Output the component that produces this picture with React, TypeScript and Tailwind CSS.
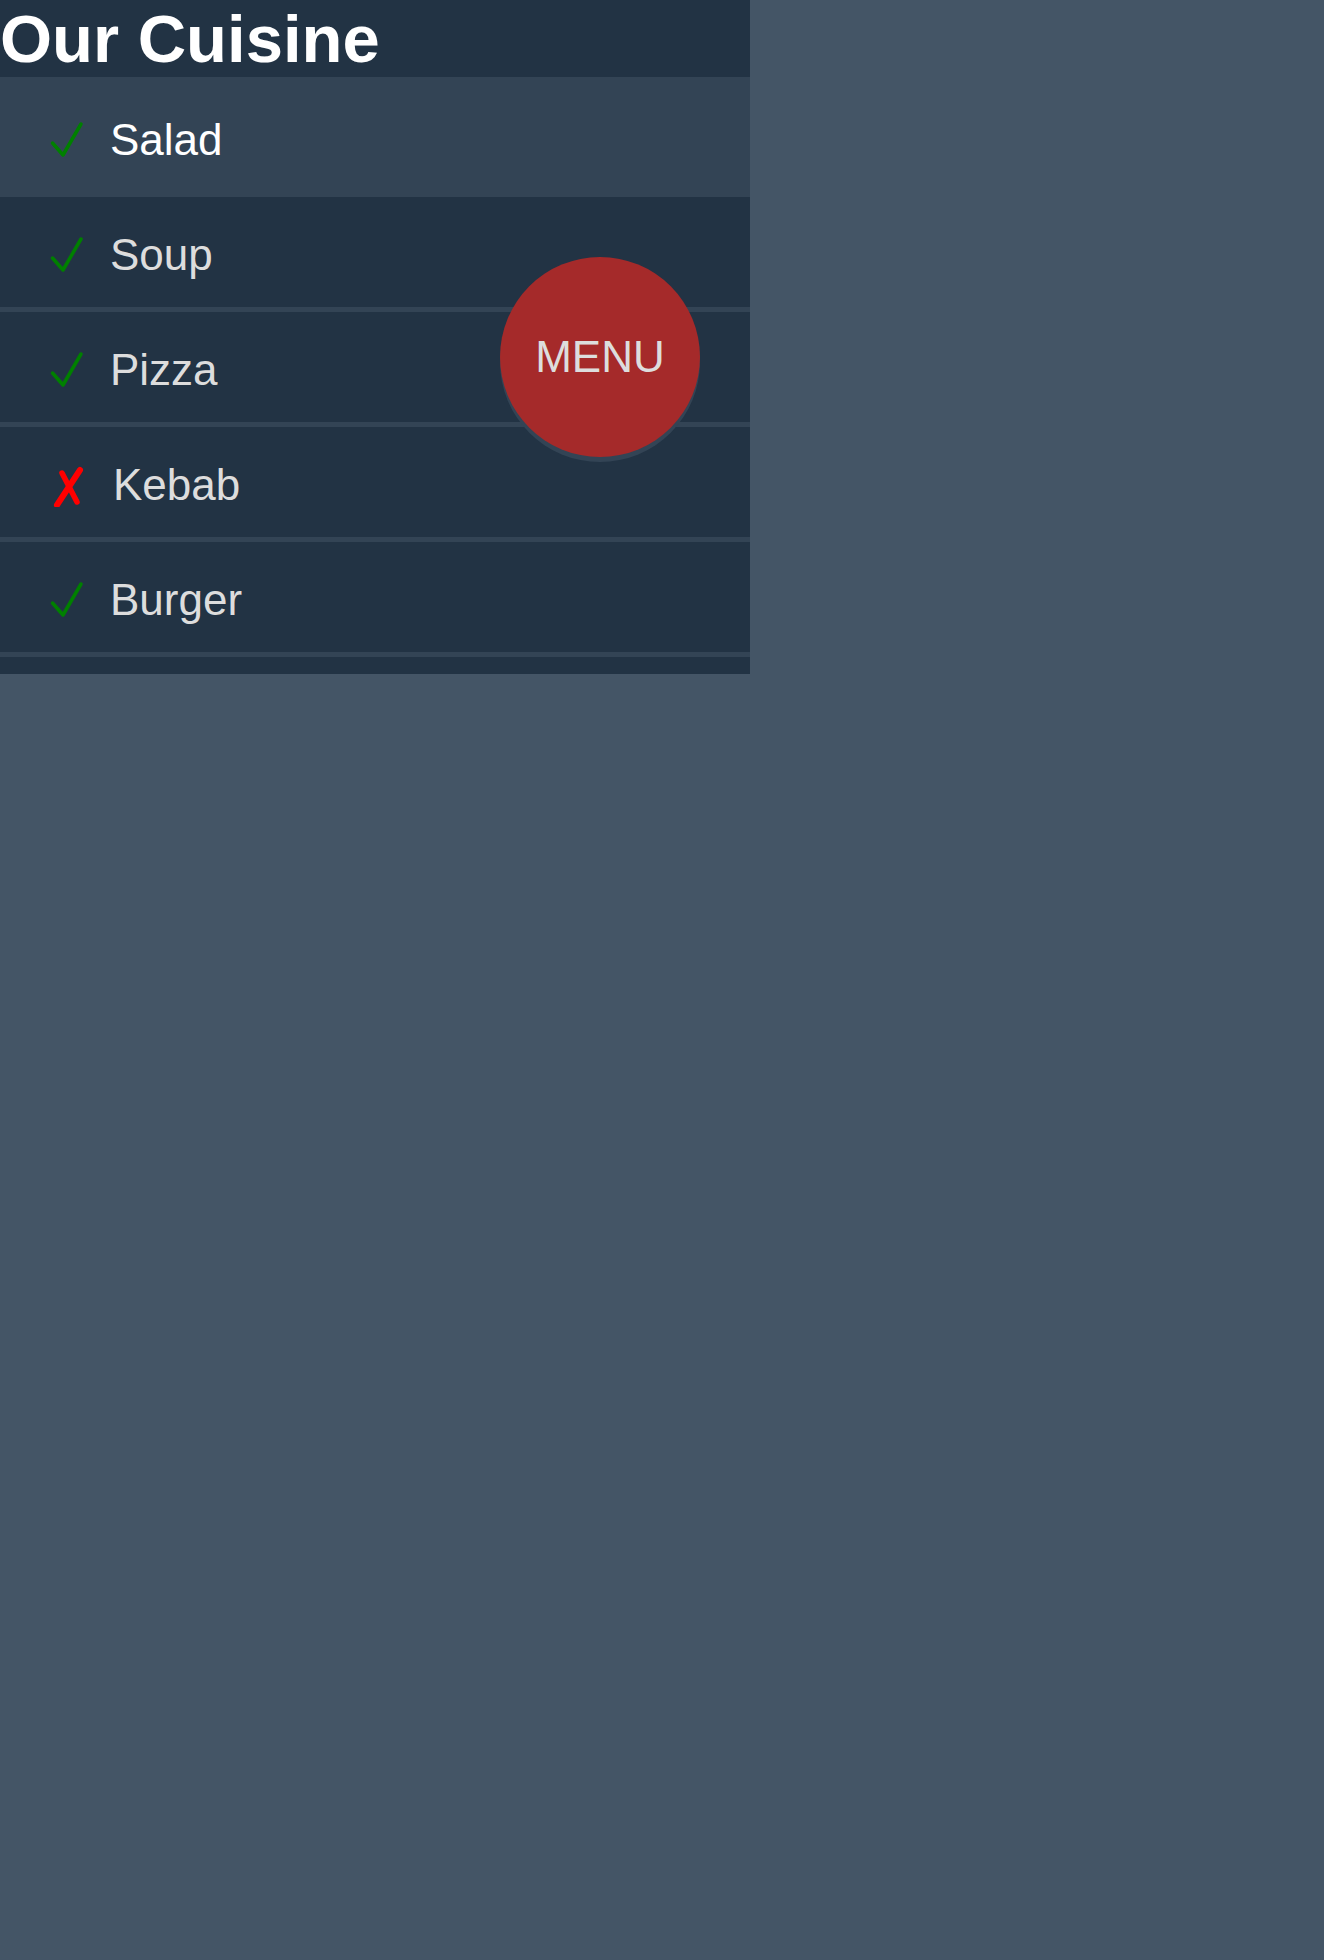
import React from "react";

type Item = { name: string; ok: boolean; active?: boolean };

const items: Item[] = [
  { name: "Salad", ok: true, active: true },
  { name: "Soup", ok: true },
  { name: "Pizza", ok: true },
  { name: "Kebab", ok: false },
  { name: "Burger", ok: true },
];

function Check() {
  return (
    <svg width="40" height="44" viewBox="0 0 40 44" className="block">
      <path
        d="M2.5 25 L13 37 L31 6"
        fill="none"
        stroke="#008000"
        strokeWidth="3.5"
        strokeLinecap="round"
        strokeLinejoin="round"
      />
    </svg>
  );
}

function Cross() {
  return (
    <svg width="40" height="44" viewBox="0 0 40 44" className="block">
      <path d="M30 7 L7 42" fill="none" stroke="#ff0000" strokeWidth="6" strokeLinecap="round" />
      <path d="M12 10 L27 39" fill="none" stroke="#ff0000" strokeWidth="5.5" strokeLinecap="round" />
    </svg>
  );
}

export default function App() {
  return (
    <div
      className="relative min-h-[1960px] w-full bg-[#445566]"
      style={{ fontFamily: '"Liberation Sans", Arial, sans-serif' }}
    >
      <div className="w-[750px] bg-[#223344]">
        <h1 className="m-0 h-[77px] text-[67px] font-bold leading-[77px] text-white">Our Cuisine</h1>
        <ul className="m-0 list-none p-0">
          {items.map((it) =>
            it.active ? (
              <li key={it.name} className="flex h-[120px] items-center bg-[#334455] pl-[50px] pt-[6px]">
                <span className="flex w-[60px] items-center">{it.ok ? <Check /> : <Cross />}</span>
                <span className="text-[44px] text-white">{it.name}</span>
              </li>
            ) : (
              <li
                key={it.name}
                className="flex h-[115px] items-center border-b-[5px] border-[#334455] pl-[50px] pt-[6px]"
              >
                <span className="flex w-[60px] items-center">{it.ok ? <Check /> : <Cross />}</span>
                <span className={it.ok ? "text-[44px] text-[#dddddd]" : "ml-[3px] text-[44px] text-[#dddddd]"}>
                  {it.name}
                </span>
              </li>
            )
          )}
        </ul>
        <div className="h-[17px]" />
      </div>
      <div className="absolute left-[500px] top-[257px] flex h-[200px] w-[200px] items-center justify-center rounded-full bg-[#a52a2a] shadow-[0_5px_0_#334455]">
        <span className="text-[44px] text-[#dddddd]">MENU</span>
      </div>
    </div>
  );
}
